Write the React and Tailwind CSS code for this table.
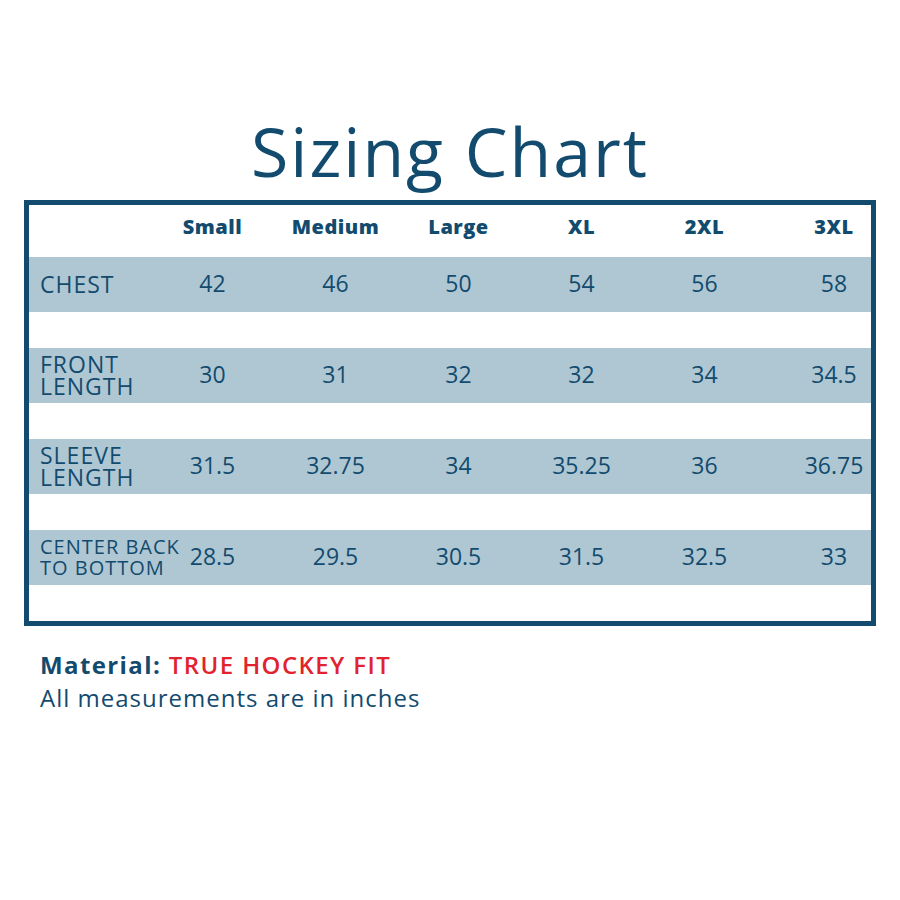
const sizes = ["Small", "Medium", "Large", "XL", "2XL", "3XL"];

const rows = [
    { label: ["CHEST"], values: ["42", "46", "50", "54", "56", "58"] },
    { label: ["FRONT", "LENGTH"], values: ["30", "31", "32", "32", "34", "34.5"] },
    { label: ["SLEEVE", "LENGTH"], values: ["31.5", "32.75", "34", "35.25", "36", "36.75"] },
    { label: ["CENTER BACK", "TO BOTTOM"], values: ["28.5", "29.5", "30.5", "31.5", "32.5", "33"], small: true },
];

const grid = "grid grid-cols-[122px_123px_123px_123px_123px_123px_106px] items-center";

export default function App() {
    return (
        <div className="w-[900px] h-[900px] bg-white text-[#124b6e]" style={{ fontFamily: "'Open Sans', sans-serif" }}>
            <div className="pt-[117px] h-[200px]">
                <h1 className="text-center text-[68px] leading-none tracking-[2px]">Sizing Chart</h1>
            </div>

            <div className="mx-[24px] border-[5px] border-[#124b6e]">
                {/* header */}
                <div className={`${grid} h-[52px] text-[20px] font-extrabold tracking-[0.5px] pb-[8px]`}>
                    <div></div>
                    {sizes.map((s, i) => (
                        <div key={s} className={`text-center ${i === 5 ? "pl-[30px]" : ""}`}>{s}</div>
                    ))}
                </div>

                {rows.map((row) => (
                    <div key={row.label.join(" ")}>
                        <div className={`${grid} h-[55px] bg-[#afc7d3] text-[23px] pb-[2px]`}>
                            <div className={`pl-[11px] whitespace-nowrap ${row.small ? "text-[20px] leading-[21px] tracking-[1px]" : "text-[23px] leading-[22px] tracking-[1px]"}`}>
                                {row.label.map((l) => (
                                    <div key={l}>{l}</div>
                                ))}
                            </div>
                            {row.values.map((v, i) => (
                                <div key={i} className={`text-center ${i === 5 ? "pl-[30px]" : ""}`}>{v}</div>
                            ))}
                        </div>
                        <div className="h-[36px]"></div>
                    </div>
                ))}
            </div>

            <div className="pl-[40px] pt-[22px] text-[24px] leading-[33px] tracking-[1px]">
                <div className="tracking-[1.4px]">
                    <span className="font-bold">Material: </span>
                    <span className="font-semibold text-[#e1232f]">TRUE HOCKEY FIT</span>
                </div>
                <div>All measurements are in inches</div>
            </div>
        </div>
    );
}
